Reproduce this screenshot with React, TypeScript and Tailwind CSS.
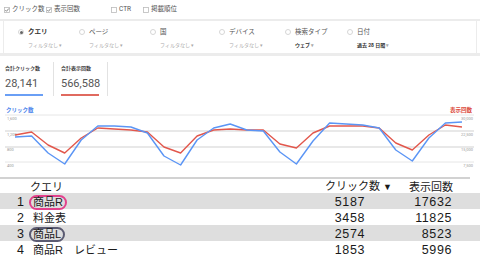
import type { ReactNode } from "react";

const BLUE = [139, 138, 155, 166, 142, 128, 128, 129, 135, 158, 167, 142, 130, 126, 132, 133, 154, 166, 143, 125, 126, 127, 130, 152, 163, 140, 125, 124];
const RED = [137, 134, 147, 155, 140, 130, 131, 132, 134, 149, 155, 138, 132, 131, 132, 132, 146, 150, 135, 128, 128, 128, 130, 145, 152, 137, 127, 129];

function toPoints(values: number[]): string {
  return values.map((y, i) => `${(15 + i * (447 / 27)).toFixed(1)},${y}`).join(" ");
}

function CheckBox({ checked }: { checked: boolean }) {
  return (
    <svg width="6" height="6" viewBox="0 0 6 6" className="shrink-0">
      <rect x="0.5" y="0.5" width="5" height="5" fill="white" stroke="#bbbbbb" strokeWidth="0.8" />
      {checked && <path d="M1.3 3.1 L2.5 4.3 L4.8 1.5" fill="none" stroke="#777" strokeWidth="0.9" />}
    </svg>
  );
}

function Radio({ on }: { on: boolean }) {
  return (
    <span className="flex h-[6px] w-[6px] shrink-0 items-center justify-center rounded-full border border-[#d6d6d6] bg-white">
      {on && <span className="h-[3px] w-[3px] rounded-full bg-[#666]" />}
    </span>
  );
}

const filters = [
  { label: "クエリ", sub: "フィルタなし", on: true, dark: false, w: "w-[61px]" },
  { label: "ページ", sub: "フィルタなし", on: false, dark: false, w: "w-[71px]" },
  { label: "国", sub: "フィルタなし", on: false, dark: false, w: "w-[69px]" },
  { label: "デバイス", sub: "フィルタなし", on: false, dark: false, w: "w-[66px]" },
  { label: "検索タイプ", sub: "ウェブ", on: false, dark: true, w: "w-[62px]" },
  { label: "日付", sub: "過去 28 日間", on: false, dark: true, w: "w-[80px]" },
];

const rows: { n: number; q: ReactNode; clicks: number; imp: number; ring?: string }[] = [
  { n: 1, q: "商品R", clicks: 5187, imp: 17632, ring: "border-[#e2418c]" },
  { n: 2, q: "料金表", clicks: 3458, imp: 11825 },
  { n: 3, q: "商品L", clicks: 2574, imp: 8523, ring: "border-[#5b5b72]" },
  { n: 4, q: "商品R\u3000レビュー", clicks: 1853, imp: 5996 },
];

export default function App() {
  return (
    <div className="h-[261px] w-[480px] overflow-hidden bg-white font-['Roboto','Noto_Sans_CJK_JP',sans-serif] text-[#444]">
      {/* metric toggles */}
      <div className="flex h-[21px] items-center border-b-[2px] border-[#ececec] pl-[4px] text-[6.5px] text-[#555]">
        <label className="flex w-[42px] items-center gap-[2px]">
          <CheckBox checked />
          クリック数
        </label>
        <label className="flex w-[65px] items-center gap-[2px]">
          <CheckBox checked />
          表示回数
        </label>
        <label className="flex w-[32px] items-center gap-[2px]">
          <CheckBox checked={false} />
          CTR
        </label>
        <label className="flex items-center gap-[2px]">
          <CheckBox checked={false} />
          掲載順位
        </label>
      </div>

      {/* dimension filters */}
      <div className="mx-[3px] flex h-[32px] border-x border-[#ececec] pl-[14px] pt-[7px]">
        {filters.map((f) => (
          <div key={f.label} className={`${f.w} flex flex-col`}>
            <div className="flex h-[8px] items-center gap-[4px]">
              <Radio on={f.on} />
              <span className={`text-[6.5px] leading-[8px] ${f.on ? "font-bold text-[#333]" : "text-[#555]"}`}>{f.label}</span>
            </div>
            <div
              className={`mt-[5px] pl-[10px] text-[5px] leading-[8px] ${f.dark ? "font-bold text-[#333]" : "text-[#aaa]"}`}
            >
              {f.sub} <span className="text-[#aaa]">▾</span>
            </div>
          </div>
        ))}
      </div>
      <div className="h-[3px] bg-[#ececec]" />

      {/* totals */}
      <div className="flex h-[42px] pl-[5px]">
        <div className="w-[38px] pt-[9px]">
          <div className="text-[5px] font-bold leading-[6px] text-[#444]">合計クリック数</div>
          <div className="mt-[7px] text-[11px] leading-[12px] text-[#555]">28,141</div>
          <div className="mt-[4px] h-[2px] bg-[#6a9ff5]" />
        </div>
        <div className="ml-[10px] mt-[6px] h-[34px] w-px bg-[#e2e2e2]" />
        <div className="ml-[7px] w-[38px] pt-[9px]">
          <div className="text-[5px] font-bold leading-[6px] text-[#444]">合計表示回数</div>
          <div className="mt-[7px] text-[11px] leading-[12px] text-[#555]">566,588</div>
          <div className="mt-[4px] h-[2px] bg-[#e06a5f]" />
        </div>
        <div className="ml-[8px] mt-[6px] h-[34px] w-px bg-[#e2e2e2]" />
      </div>

      {/* chart */}
      <svg width="480" height="79" viewBox="0 100 480 79" className="block">
        <text x="6" y="114" fontSize="5.5" fontWeight="bold" fill="#4e86ec" fontFamily="Noto Sans CJK JP">
          クリック数
        </text>
        <text x="472" y="114" fontSize="5.5" fontWeight="bold" fill="#dc4a3c" textAnchor="end" fontFamily="Noto Sans CJK JP">
          表示回数
        </text>
        <line x1="5" x2="474" y1="117" y2="117" stroke="#e6e6e6" strokeWidth="1" />
        <line x1="5" x2="474" y1="133" y2="133" stroke="#e8e8e8" strokeWidth="2" />
        <line x1="5" x2="474" y1="149" y2="149" stroke="#e8e8e8" strokeWidth="2" />
        <line x1="5" x2="474" y1="164" y2="164" stroke="#e6e6e6" strokeWidth="1" />
        <g fontSize="4" fill="#999" fontFamily="Roboto">
          <text x="7" y="121.5">1,600</text>
          <text x="7" y="137.5">1,200</text>
          <text x="7" y="153">800</text>
          <text x="7" y="168.5">400</text>
        </g>
        <g fontSize="4" fill="#999" fontFamily="Roboto" textAnchor="end">
          <text x="473" y="121.5">30,000</text>
          <text x="473" y="137.5">22,500</text>
          <text x="473" y="153">15,000</text>
          <text x="473" y="168.5">7,500</text>
        </g>
        <polyline points={toPoints(RED)} fill="none" stroke="#e2574c" strokeWidth="1.4" strokeLinejoin="round" />
        <polyline points={toPoints(BLUE)} fill="none" stroke="#5b95f5" strokeWidth="1.4" strokeLinejoin="round" />
      </svg>

      {/* query table */}
      <div className="h-[2px] w-[470px] bg-[#d2d2d2]" />
      <div className="font-['Liberation_Sans','Noto_Sans_CJK_JP',sans-serif] text-[#1a1a1a]">
        <div className="grid h-[14px] grid-cols-[28px_292px_52px_88px] items-center text-[11px] leading-[14px]">
          <div />
          <div className="pl-[2px]">クエリ</div>
          <div className="whitespace-nowrap pl-[5px]">
            クリック数 <span className="text-[9px]">▼</span>
          </div>
          <div className="pr-[7px] text-right">表示回数</div>
        </div>
        {rows.map((r, i) => (
          <div
            key={r.n}
            className={`grid h-[16px] grid-cols-[28px_292px_52px_88px] items-center ${i % 2 === 0 ? "bg-[#dedede]" : "bg-white"}`}
          >
            <div className="pr-[4px] text-right text-[12.5px] leading-[16px]">{r.n}</div>
            <div className="flex items-center pl-[5px] text-[11px]">
              {r.ring ? (
                <span className={`-ml-[4px] rounded-full border-2 ${r.ring} px-[2px] leading-[11px]`}>{r.q}</span>
              ) : (
                <span className="whitespace-pre">{r.q}</span>
              )}
            </div>
            <div className="pr-[7px] text-right text-[12.5px] tracking-[0.6px]">{r.clicks}</div>
            <div className="pr-[8px] text-right text-[12.5px] tracking-[0.6px]">{r.imp}</div>
          </div>
        ))}
      </div>
    </div>
  );
}
